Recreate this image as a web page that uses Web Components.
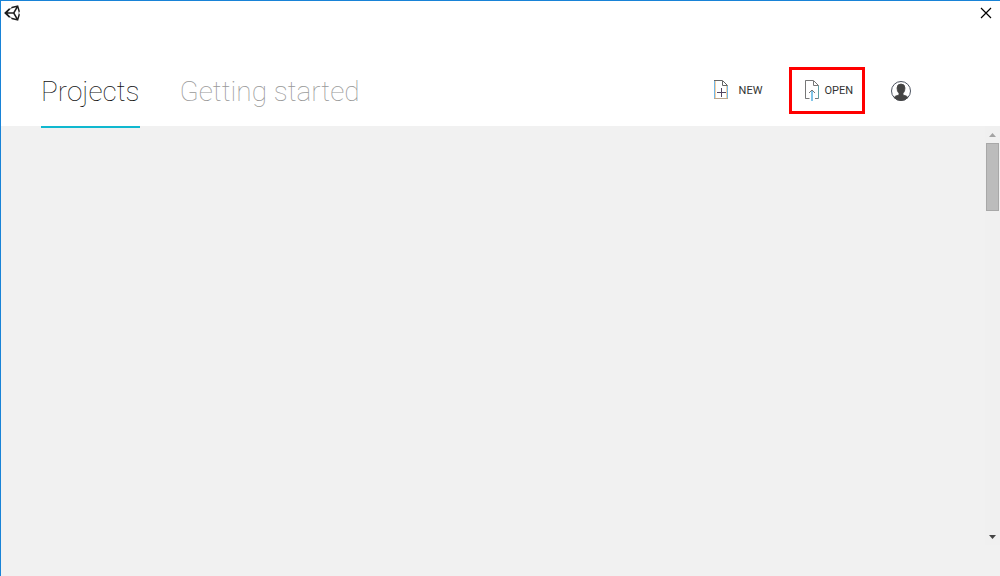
<!DOCTYPE html>
<html lang="en">
<head>
<meta charset="utf-8">
<title>Projects</title>
<style>
  html, body { margin: 0; height: 100%; }
  body { font-family: Roboto, "Liberation Sans", sans-serif; background: #f1f1f1; color: #222; }
</style>
</head>
<body>
<launcher-window>
  <title-bar slot="title"></title-bar>
  <launcher-header slot="header">
    <nav-tab slot="tabs" active href="#projects">Projects</nav-tab>
    <nav-tab slot="tabs" href="#start">Getting started</nav-tab>
    <tool-button slot="tools" icon="new">NEW</tool-button>
    <tool-button slot="tools" icon="open" marked>OPEN</tool-button>
    <account-button slot="tools"></account-button>
  </launcher-header>
  <project-list></project-list>
</launcher-window>
<script>
const define = (name, html, setup) => customElements.define(name, class extends HTMLElement {
  constructor() {
    super();
    this.attachShadow({ mode: "open" }).innerHTML = html;
  }
  connectedCallback() { if (setup) setup(this, this.shadowRoot); }
});

define("launcher-window", `
<style>
  :host { display: flex; flex-direction: column; box-sizing: border-box; min-height: 100vh;
    border-top: 1px solid #1883d7; border-left: 1px solid #1883d7; }
  main { flex: 1; display: flex; flex-direction: column; padding-bottom: 31px; background: #f1f1f1; }
</style>
<slot name="title"></slot><slot name="header"></slot><main><slot></slot></main>`);

define("title-bar", `
<style>
  :host { display: flex; justify-content: space-between; align-items: center; height: 24px;
    padding: 0 8px 0 3px; background: #fff; }
  button { border: 0; padding: 0; background: none; display: flex; }
  svg { display: block; }
</style>
<svg width="16" height="16" viewBox="-2 0 24 24" fill="#1c1c1c" fill-rule="evenodd" aria-hidden="true">
  <path d="M19.240 .25 21.850 9.300 20.400 12 21.850 14.700 19.240 23.750 9.560 21.200 8.120 18.640 5.200 18.660-1.870 12 5.200 5.340 8.120 5.360 9.560 2.810ZM13.970 12l4.270-7.400L20.300 12l-2.060 7.400ZM11.890 13.200l4.270 7.400-7.440-1.910-5.370-5.490ZM16.160 3.390l-4.270 7.400H3.350L8.720 5.300Z"/>
</svg>
<button aria-label="Close"><svg width="12" height="12" viewBox="0 0 12 12" stroke="#000" stroke-width="1.2"><path d="M1 1 11 11M11 1 1 11"/></svg></button>`);

define("launcher-header", `
<style>
  :host { display: flex; justify-content: space-between; align-items: flex-end; height: 101px;
    padding: 0 88px 0 40px; background: #fff; }
  nav { display: flex; gap: 40px; }
  .tools { display: flex; align-items: center; padding-bottom: 12px; }
</style>
<nav><slot name="tabs"></slot></nav><div class="tools"><slot name="tools"></slot></div>`);

define("nav-tab", `
<style>
  :host { display: block; position: relative; margin-bottom: -2px; }
  a { display: block; font-size: 28px; line-height: 36px; font-weight: 100; color: #999;
    text-decoration: none; padding-bottom: 16px; border-bottom: 2px solid transparent; white-space: nowrap; }
  :host([active]) a { color: #111; border-color: #10b8cf; }
</style>
<a><slot></slot></a>`, (el, root) => { root.querySelector("a").href = el.getAttribute("href"); });

define("tool-button", `
<style>
  :host { display: block; margin-right: 25px; }
  button { display: flex; align-items: center; gap: 10px; height: 47px; padding: 0 2px 0 0; border: 0;
    background: none; color: #333; font: 11px/16px Roboto, "Liberation Sans", sans-serif; }
  :host([marked]) button { gap: 4px; padding: 0 9px 0 12px; border: 3px solid #f00; }
  svg { display: block; padding-bottom: 2px; }
</style>
<button><svg width="16" height="22" viewBox="0 0 16 22" fill="none" aria-hidden="true"></svg><slot></slot></button>`,
(el, root) => {
  const art = {
    new: `<path d="M1.500 1V20" stroke="#70b8ea"/><path d="M2.500 2V19M13.500 7V19" stroke="#f5bd7c" stroke-opacity=".7"/>
      <path d="M14.500 7V20" stroke="#70b8ea"/><path d="M1 1.500H9.500L14.500 6.500H9.500V2" stroke="#666"/>
      <path d="M1 19.500H15" stroke="#b9a58e"/><path d="M4 13.500H13M8.500 9V18" stroke="#54455f"/>`,
    open: `<path d="M1.500 1.500V19.500" stroke="#8ba3b1"/><path d="M14.500 6.500V19.500" stroke="#5f9fa5"/>
      <path d="M5.500 19.500H1.500V1.500H9.500L14.500 6.500H9.500V2M11 19.500H14.500" stroke="#777"/>
      <path d="M8 11V22" stroke="#81c5e8" stroke-width="2"/><path d="M5 14 8 11 11 14" stroke="#777"/>`
  };
  root.querySelector("svg").innerHTML = art[el.getAttribute("icon")];
});

define("account-button", `
<style>
  :host { display: block; }
  button { display: flex; padding: 0; border: 0; background: none; }
</style>
<button aria-label="Account"><svg width="22" height="22" viewBox="0 0 22 22">
  <circle cx="11" cy="11" r="9.500" fill="#fff" stroke="#4c5360"/>
  <path d="M4 17.500Q5 15.800 9 15V13.500Q7 11.500 7 8Q7 4 11 4Q15 4 15 8Q15 11.500 13 13.500V15Q17 15.800 18 17.500Q15 20.500 11 20.500Q7 20.500 4 17.500Z" fill="#444" stroke="#444" stroke-width=".8"/>
</svg></button>`);

define("project-list", `
<style>
  :host { flex: 1; display: flex; justify-content: flex-end; }
  .bar { width: 15px; display: flex; flex-direction: column; align-items: center; background: #f0f0f0; }
  .up, .down { height: 17px; display: flex; align-items: center; }
  .thumb { box-sizing: border-box; width: 13px; height: 68px; background: #bcbcbc; border: 1px solid #a8a8a8; }
  .down { margin-top: auto; }
  svg { display: block; }
</style>
<div class="bar" aria-hidden="true">
  <div class="up"><svg width="7" height="4" viewBox="0 0 7 4"><path d="M0 4 3.500 0 7 4Z" fill="#a3a3a3"/></svg></div>
  <div class="thumb"></div>
  <div class="down"><svg width="7" height="4" viewBox="0 0 7 4"><path d="M0 0H7L3.500 4Z" fill="#444"/></svg></div>
</div>`);
</script>
</body>
</html>
